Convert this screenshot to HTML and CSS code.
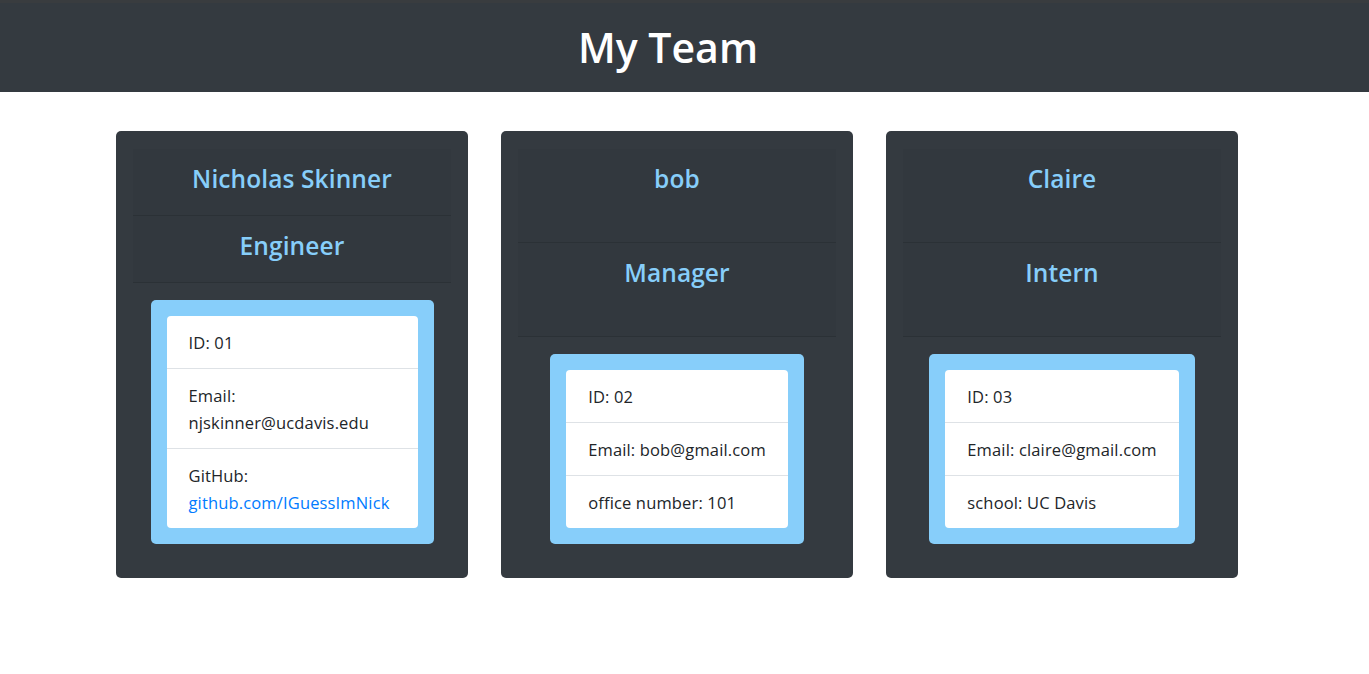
FILE: index.html
```html
<!DOCTYPE html>
<html lang="en">
<head>
<meta charset="utf-8">
<title>My Team</title>
<link rel="stylesheet" href="styles.css">
</head>
<body>
<header class="topbar">
  <h1 class="title">My Team</h1>
</header>
<main class="page">
  <div class="team">
    <section class="card">
      <div class="card-header"><h2 class="name">Nicholas Skinner</h2></div>
      <div class="card-header"><h2 class="role">Engineer</h2></div>
      <div class="card-body">
        <div class="info-box">
          <ul class="info-list">
            <li class="info-item">ID: 01</li>
            <li class="info-item">Email: njskinner@ucdavis.edu</li>
            <li class="info-item">GitHub: <a class="link" href="#">github.com/IGuessImNick</a></li>
          </ul>
        </div>
      </div>
    </section>
    <section class="card">
      <div class="card-header"><h2 class="name">bob</h2></div>
      <div class="card-header"><h2 class="role">Manager</h2></div>
      <div class="card-body">
        <div class="info-box">
          <ul class="info-list">
            <li class="info-item">ID: 02</li>
            <li class="info-item">Email: bob@gmail.com</li>
            <li class="info-item">office number: 101</li>
          </ul>
        </div>
      </div>
    </section>
    <section class="card">
      <div class="card-header"><h2 class="name">Claire</h2></div>
      <div class="card-header"><h2 class="role">Intern</h2></div>
      <div class="card-body">
        <div class="info-box">
          <ul class="info-list">
            <li class="info-item">ID: 03</li>
            <li class="info-item">Email: claire@gmail.com</li>
            <li class="info-item">school: UC Davis</li>
          </ul>
        </div>
      </div>
    </section>
  </div>
</main>
</body>
</html>
```
FILE: styles.css
```css
* { box-sizing: border-box; }
html, body { margin: 0; padding: 0; }
body {
  font-family: "Open Sans", "Noto Sans", sans-serif;
  font-size: 16.5px;
  letter-spacing: 0.15px;
  line-height: 27px;
  color: #212529;
  background: #fff;
}
.topbar {
  background: #343a40;
  border-top: 3px solid #393c3f;
  height: 92px;
  display: flex;
  align-items: center;
  justify-content: center;
  padding-right: 33px;
}
.title {
  margin: 0;
  color: #fff;
  font-size: 41px;
  font-weight: 600;
  letter-spacing: 0;
  line-height: 1.2;
}
.page {
  padding-right: 15px;
}
.team {
  width: 1122px;
  margin: 39px auto 0;
  display: grid;
  grid-template-columns: repeat(3, 352px);
  column-gap: 33px;
  align-items: stretch;
}
.card {
  background: #343a40;
  border-radius: 5px;
  padding: 18px 17px 0;
  display: flex;
  flex-direction: column;
}
.card-header {
  flex: 1 1 auto;
  display: flex;
  align-items: flex-start;
  justify-content: center;
  background: rgba(0, 0, 0, 0.03);
  border-bottom: 1px solid rgba(0, 0, 0, 0.125);
  padding-top: 15px;
  min-height: 67px;
}
.name, .role {
  margin: 0;
  color: #87cefa;
  font-size: 24.5px;
  font-weight: 600;
  letter-spacing: 0.1px;
  line-height: 30px;
}
.card-body {
  flex: 0 0 auto;
  padding: 17px 0 34px;
  display: flex;
  justify-content: center;
}
.info-box {
  background: #87cefa;
  border-radius: 5px;
  padding: 16px;
  max-width: 283px;
}
.info-list {
  list-style: none;
  margin: 0;
  padding: 0;
  background: #fff;
  border-radius: 4px;
}
.info-item {
  padding: 12.5px 22px;
  border-bottom: 1px solid #dee2e6;
}
.info-item:last-child { border-bottom: 0; }
.link {
  color: #007bff;
  text-decoration: none;
}
```
